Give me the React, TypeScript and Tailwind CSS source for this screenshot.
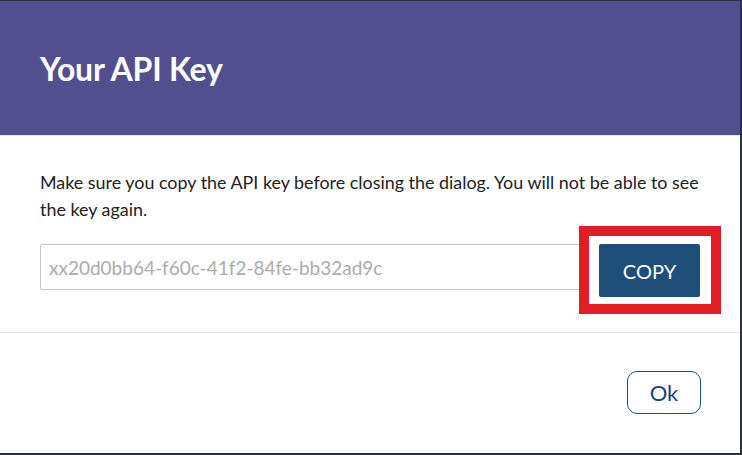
import React from "react";

const App: React.FC = () => {
  return (
    <div className="w-[742px] h-[455px] bg-[#2e3142] pt-px pr-[2px] pb-[2px] font-['Lato',sans-serif]">
      <div className="h-full bg-white flex flex-col">
        <div className="h-[135px] bg-[#534f8f] border-b border-[#dfe6f5] flex items-center px-10 pt-[2px]">
          <h1 className="text-white text-[32px] font-bold tracking-[-0.2px]">Your API Key</h1>
        </div>
        <div className="px-10 pt-[33px] pb-[35px] border-b border-[#e6e6e6]">
          <p className="text-[#222] text-[17.9px] leading-[27px]">
            Make sure you copy the API key before closing the dialog. You will not be able to see the key again.
          </p>
          <div className="flex items-start gap-[10px] mt-[21px]">
            <input
              readOnly
              placeholder="xx20d0bb64-f60c-41f2-84fe-bb32ad9c"
              className="w-[550px] h-[46px] border border-[#c8c8c8] rounded-[2px] px-2 text-[19px] placeholder:text-[#acacac] outline-none"
            />
            <div className="relative">
              <button className="w-[101px] h-[53px] bg-[#1f4e79] text-white text-[20px] rounded-[2px]">COPY</button>
              <div className="absolute -left-5 -top-[18px] w-[142px] h-[88px] border-[10px] border-[#e21d25] pointer-events-none" />
            </div>
          </div>
        </div>
        <div className="flex-1 flex justify-end items-start pl-10 pr-[39px] pt-[38px]">
          <button className="w-[74px] h-[43px] border border-[#1f4e79] rounded-[10px] text-[#1e3f85] text-[22px]">Ok</button>
        </div>
      </div>
    </div>
  );
};

export default App;
